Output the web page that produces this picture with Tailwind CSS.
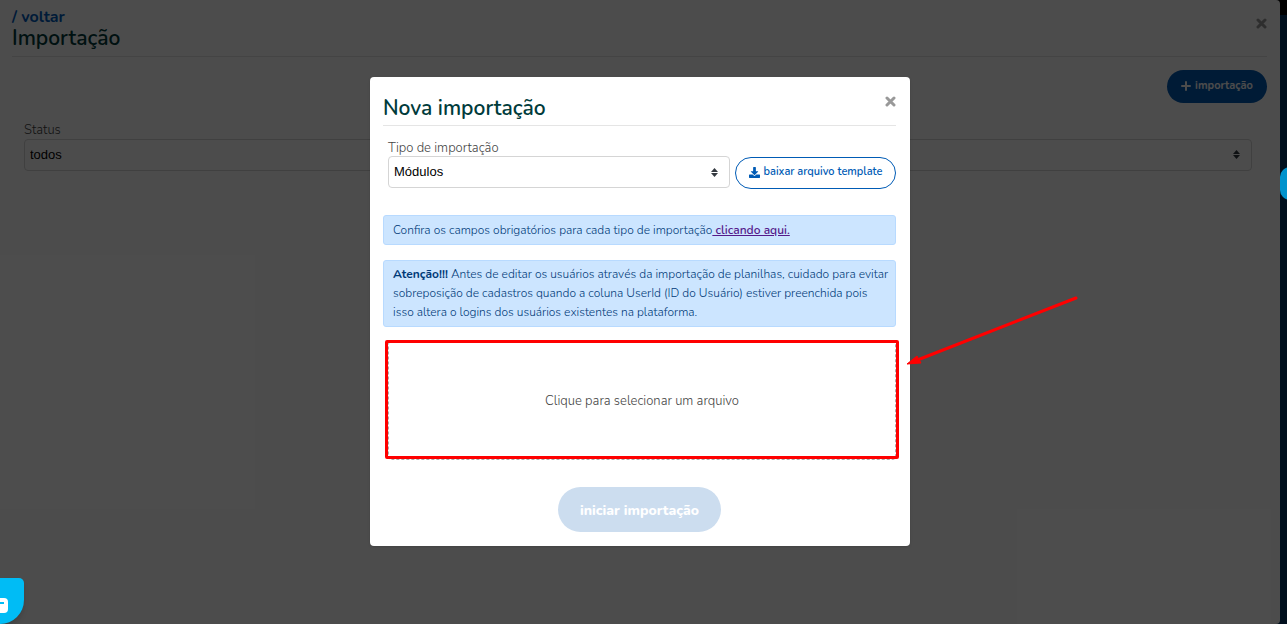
<!DOCTYPE html>
<html lang="pt-br">
<head>
  <meta charset="UTF-8">
  <title>Importação</title>
  <meta name="viewport" content="width=device-width, initial-scale=1">
  <script src="https://cdn.jsdelivr.net/npm/@tailwindcss/browser@4"></script>
</head>
<body class="relative min-h-screen overflow-hidden bg-[#003462] font-['Nunito','Lato',sans-serif] font-light text-[#444]">
  <!-- Barra superior da plataforma -->
  <div class="absolute top-0 right-0 h-[15px] w-full bg-black"></div>

  <!-- Painel lateral -->
  <main class="relative mr-[7px] min-h-screen rounded-r-sm bg-white pr-[13px] pl-3 pt-2">
    <header class="flex items-start justify-between border-b border-[#e5e5e5] pb-[5px]">
      <div>
        <a href="#" class="block text-[16px] leading-[18px] font-bold text-[#005bbb]">/ voltar</a>
        <h1 class="text-[21px] leading-[25px] font-semibold text-[#003b3b]">Importação</h1>
      </div>
      <button type="button" aria-label="Fechar painel" class="mt-[10px] text-[#999]">
        <svg class="size-[11px]" viewBox="0 0 11 11" stroke="currentColor" stroke-width="3" stroke-linecap="round"><path d="M2 2l7 7M9 2l-7 7"/></svg>
      </button>
    </header>

    <div class="mt-[13px] flex justify-end">
      <button type="button" class="flex h-[33px] w-[100px] items-center justify-center gap-1 rounded-full bg-[#005bb5] pb-px text-[11px] font-bold text-white">
        <svg class="size-[10px]" viewBox="0 0 10 10" stroke="currentColor" stroke-width="2" stroke-linecap="round"><path d="M5 1v8M1 5h8"/></svg>
        importação
      </button>
    </div>

    <div class="mt-[19px] pr-[15px] pl-3">
      <label for="status" class="block text-[13px] leading-[17px]">Status</label>
      <div class="relative">
        <select id="status" class="block h-8 w-full appearance-none rounded border border-[#d5d5d5] bg-white px-[5px] font-['Liberation_Sans',Arial,sans-serif] text-[13px] font-normal text-black">
          <option>todos</option>
        </select>
        <svg class="pointer-events-none absolute top-[11px] right-3 h-[9px] w-[7px] text-[#343a40]" viewBox="0 0 7 9" fill="currentColor"><path d="M3.5 0L7 4H0zM3.5 9L0 5h7z"/></svg>
      </div>
    </div>
  </main>

  <!-- Fundo escuro + modal -->
  <div class="absolute inset-0 flex items-center justify-center bg-black/70 pr-[7px] pb-[2px]">
    <section role="dialog" aria-labelledby="titulo" class="w-[540px] rounded bg-white pr-[14px] pl-[13px] pt-4 pb-[14px] shadow-sm">
      <header class="flex items-start justify-between border-b border-[#e5e5e5] pb-px">
        <h2 id="titulo" class="text-[21px] leading-[31px] font-semibold text-[#003b3b]">Nova importação</h2>
        <button type="button" aria-label="Fechar" class="mt-[3px] text-[#999]">
          <svg class="size-[11px]" viewBox="0 0 11 11" stroke="currentColor" stroke-width="3" stroke-linecap="round"><path d="M2 2l7 7M9 2l-7 7"/></svg>
        </button>
      </header>

      <div class="mt-[14px] flex items-end gap-[5px] pl-[5px]">
        <div class="grow pb-px">
          <label for="tipo" class="block text-[13px] leading-[16px]">Tipo de importação</label>
          <div class="relative">
            <select id="tipo" class="block h-8 w-full appearance-none rounded border border-[#d5d5d5] bg-white px-[5px] font-['Liberation_Sans',Arial,sans-serif] text-[13px] font-normal text-black">
              <option>Módulos</option>
            </select>
            <svg class="pointer-events-none absolute top-3 right-3 h-[9px] w-[7px] text-[#343a40]" viewBox="0 0 7 9" fill="currentColor"><path d="M3.5 0L7 4H0zM3.5 9L0 5h7z"/></svg>
          </div>
        </div>
        <button type="button" class="flex h-8 w-[161px] items-center justify-center gap-1 rounded-full border border-[#005bb5] text-[11px] font-semibold text-[#005bb5]">
          <svg class="size-[11px]" viewBox="0 0 512 512" fill="currentColor"><path d="M216 0h80c13 0 24 11 24 24v168h88c18 0 27 22 14 34L270 378c-8 8-20 8-28 0L90 226c-13-12-4-34 14-34h88V24c0-13 11-24 24-24zM512 376v112c0 13-11 24-24 24H24c-13 0-24-11-24-24V376c0-13 11-24 24-24h147l49 49c20 20 52 20 72 0l49-49h147c13 0 24 11 24 24z"/></svg>
          baixar arquivo template
        </button>
      </div>

      <p class="mt-[26px] rounded-[3px] border border-[#b8daff] bg-[#cce5ff] px-[9px] py-[5px] text-[12px] leading-[18px] text-[#003a78]">Confira os campos obrigatórios para cada tipo de importação<a href="#" class="font-semibold text-[#551a8b] underline"> clicando aqui.</a></p>

      <p class="mt-[15px] rounded-[3px] border border-[#b8daff] bg-[#cce5ff] py-1 pl-[9px] text-[12px] leading-[19px] text-[#003a78]"><strong class="font-bold text-[#003a78]">Atenção!!!</strong> Antes de editar os usuários através da importação de planilhas, cuidado para evitar<br> sobreposição de cadastros quando a coluna UserId (ID do Usuário) estiver preenchida pois<br> isso altera o logins dos usuários existentes na plataforma.</p>

      <div class="relative mt-[14px] ml-[5px]">
        <button type="button" class="block h-[119px] w-full rounded-sm border border-dashed border-[#aaa] pt-1 text-[13px]">Clique para selecionar um arquivo</button>
        <div class="pointer-events-none absolute -top-px -right-[3px] bottom-px -left-[3px] rounded-xs border-3 border-[#f00]"></div>
      </div>

      <div class="mt-[27px] flex justify-center">
        <button type="button" disabled class="h-[45px] w-[163px] rounded-full bg-[#ccddef] pt-0.5 text-[14px] font-extrabold text-white">iniciar importação</button>
      </div>
    </section>
  </div>

  <!-- Seta de destaque -->
  <svg class="pointer-events-none absolute top-[295px] left-[906px] h-[70px] w-[172px]" viewBox="0 0 172 70" fill="#f00"><path d="M170 3L14 64" stroke="#f00" stroke-width="3" stroke-linecap="round"/><path d="M1 69L11 61L15 68Z" stroke="#f00"/></svg>

  <!-- Atalhos flutuantes -->
  <button type="button" aria-label="Acessibilidade" class="absolute top-[167px] -right-[23px] h-[33px] w-[30px] rounded-[10px] bg-[#0092cc]"></button>
  <button type="button" aria-label="Chat" class="absolute bottom-0 left-0 flex h-[46px] w-6 items-center rounded-tr-[5px] rounded-br-[24px] bg-[#00bcf5] pt-2 shadow-md">
    <svg class="h-[15px] w-2" viewBox="0 0 8 15"><path d="M0 0h4q4 0 4 4v7q0 4-4 4H0z" fill="#fff"/><path d="M0 5h4" stroke="#00bcf5" stroke-width="2"/></svg>
  </button>
</body>
</html>
